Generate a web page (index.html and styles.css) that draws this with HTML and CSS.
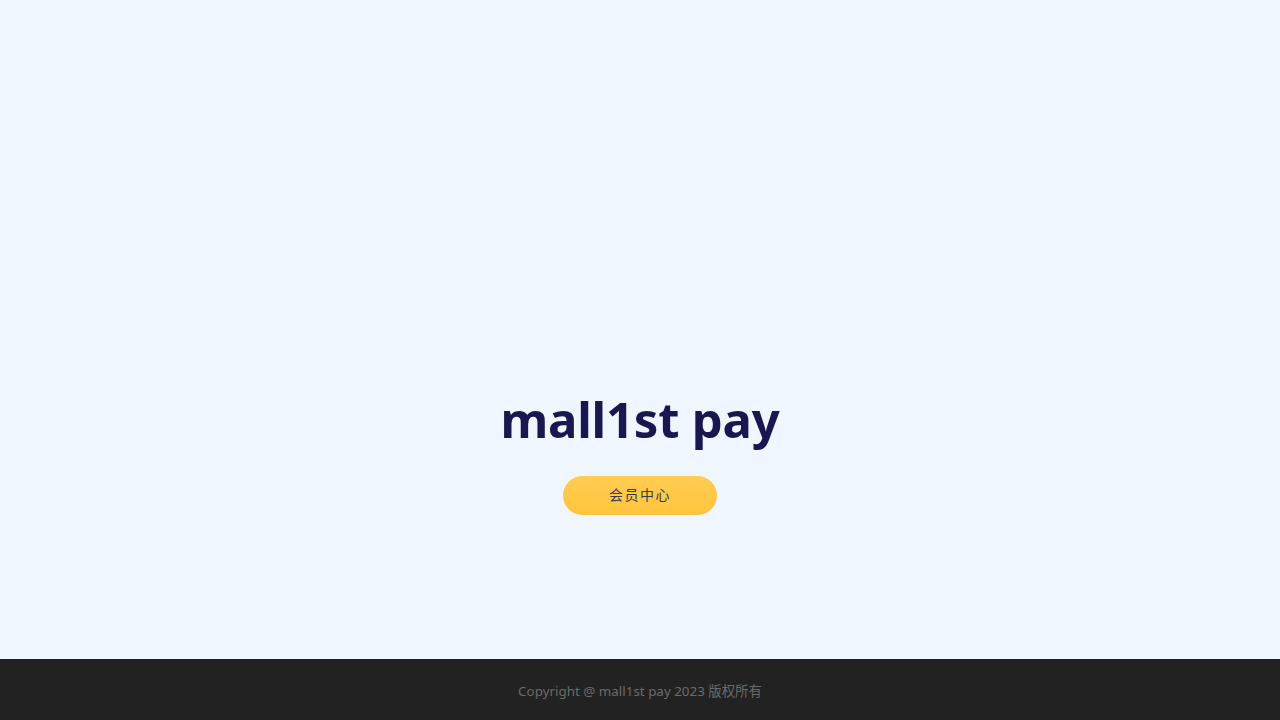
FILE: index.html
```html
<!DOCTYPE html>
<html lang="zh-CN">
<head>
<meta charset="utf-8">
<title>mall1st pay</title>
<link rel="stylesheet" href="styles.css">
</head>
<body>
<main class="hero">
  <h1 class="title">mall1st pay</h1>
  <a class="btn" href="#">会员中心</a>
</main>
<footer class="footer">Copyright @ mall1st pay 2023 版权所有</footer>
</body>
</html>
```
FILE: styles.css
```css
html, body {
  margin: 0;
  padding: 0;
  height: 100%;
}
body {
  display: flex;
  flex-direction: column;
  background: #f0f6fe;
  font-family: "Noto Sans", "Noto Sans CJK SC", sans-serif;
}
.hero {
  flex: 1;
  display: flex;
  flex-direction: column;
  align-items: center;
  padding-top: 384px;
  box-sizing: border-box;
}
.title {
  margin: 0;
  font-size: 49px;
  font-weight: 700;
  line-height: 70px;
  color: #1a1650;
  letter-spacing: -0.2px;
}
.btn {
  margin-top: 22px;
  width: 154px;
  height: 39px;
  border-radius: 20px;
  background: linear-gradient(180deg, #ffcd52 0%, #ffc43c 100%);
  color: #3a3a4a;
  font-size: 14px;
  line-height: 1;
  letter-spacing: 1.5px;
  text-decoration: none;
  display: flex;
  align-items: center;
  justify-content: center;
  padding-bottom: 2px;
  box-sizing: border-box;
}
.footer {
  height: 61px;
  background: #222222;
  color: #6b6b6b;
  font-size: 13.4px;
  display: flex;
  align-items: center;
  justify-content: center;
}
```
